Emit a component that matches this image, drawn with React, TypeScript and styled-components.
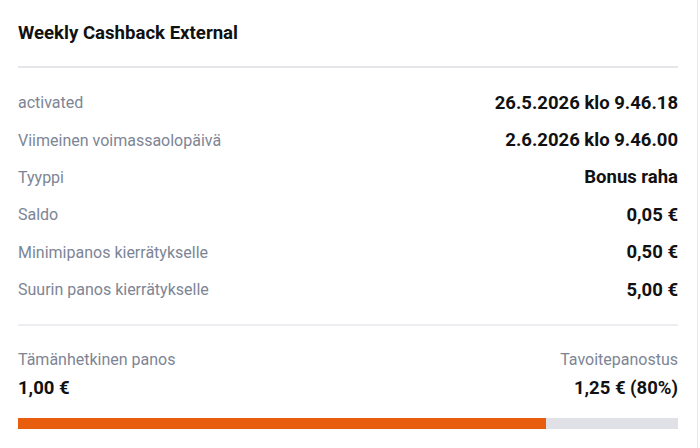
import styled, { createGlobalStyle } from "styled-components";

const GlobalStyle = createGlobalStyle`
  body {
    margin: 0;
    background: #ffffff;
    font-family: Roboto, "Liberation Sans", Arial, sans-serif;
  }
`;

type Row = {
  label: string;
  value: string;
};

const rows: Row[] = [
  { label: "activated", value: "26.5.2026 klo 9.46.18" },
  { label: "Viimeinen voimassaolopäivä", value: "2.6.2026 klo 9.46.00" },
  { label: "Tyyppi", value: "Bonus raha" },
  { label: "Saldo", value: "0,05 €" },
  { label: "Minimipanos kierrätykselle", value: "0,50 €" },
  { label: "Suurin panos kierrätykselle", value: "5,00 €" },
];

const Panel = styled.div`
  width: 698px;
  height: 448px;
  box-sizing: border-box;
  padding: 0 19px 0 18px;
  border-right: 1px solid #e6e8ec;
  background: #ffffff;
`;

const Header = styled.div`
  height: 68px;
  display: flex;
  align-items: center;
  border-bottom: 2px solid #e4e6ea;
  box-sizing: border-box;
`;

const Title = styled.h2`
  margin: 0;
  font-size: 18.6px;
  font-weight: 700;
  color: #111111;
`;

const InfoList = styled.div`
  padding: 16px 0 16px;
  border-bottom: 2px solid #eceef1;
`;

const InfoRow = styled.div`
  height: 37.4px;
  display: flex;
  align-items: center;
  justify-content: space-between;
`;

const Label = styled.span`
  font-size: 16px;
  color: #7d8595;
`;

const Value = styled.span`
  font-size: 18.5px;
  font-weight: 700;
  color: #111111;
`;

const Progress = styled.div`
  padding-top: 24px;
`;

const ProgressHead = styled.div`
  display: flex;
  justify-content: space-between;
`;

const Column = styled.div<{ $align?: "left" | "right" }>`
  display: flex;
  flex-direction: column;
  align-items: ${(p) => (p.$align === "right" ? "flex-end" : "flex-start")};
  gap: 8px;
`;

const Track = styled.div`
  margin-top: 19px;
  height: 11px;
  background: #dfe1e7;
`;

const Fill = styled.div`
  height: 100%;
  background: #e85e0e;
`;

export default function App() {
  const percent = 80;
  return (
    <>
      <GlobalStyle />
      <Panel>
        <Header>
          <Title>Weekly Cashback External</Title>
        </Header>
        <InfoList>
          {rows.map((r) => (
            <InfoRow key={r.label}>
              <Label>{r.label}</Label>
              <Value>{r.value}</Value>
            </InfoRow>
          ))}
        </InfoList>
        <Progress>
          <ProgressHead>
            <Column>
              <Label>Tämänhetkinen panos</Label>
              <Value>1,00 €</Value>
            </Column>
            <Column $align="right">
              <Label>Tavoitepanostus</Label>
              <Value>1,25 € ({percent}%)</Value>
            </Column>
          </ProgressHead>
          <Track>
            <Fill style={{ width: `${percent}%` }} />
          </Track>
        </Progress>
      </Panel>
    </>
  );
}
